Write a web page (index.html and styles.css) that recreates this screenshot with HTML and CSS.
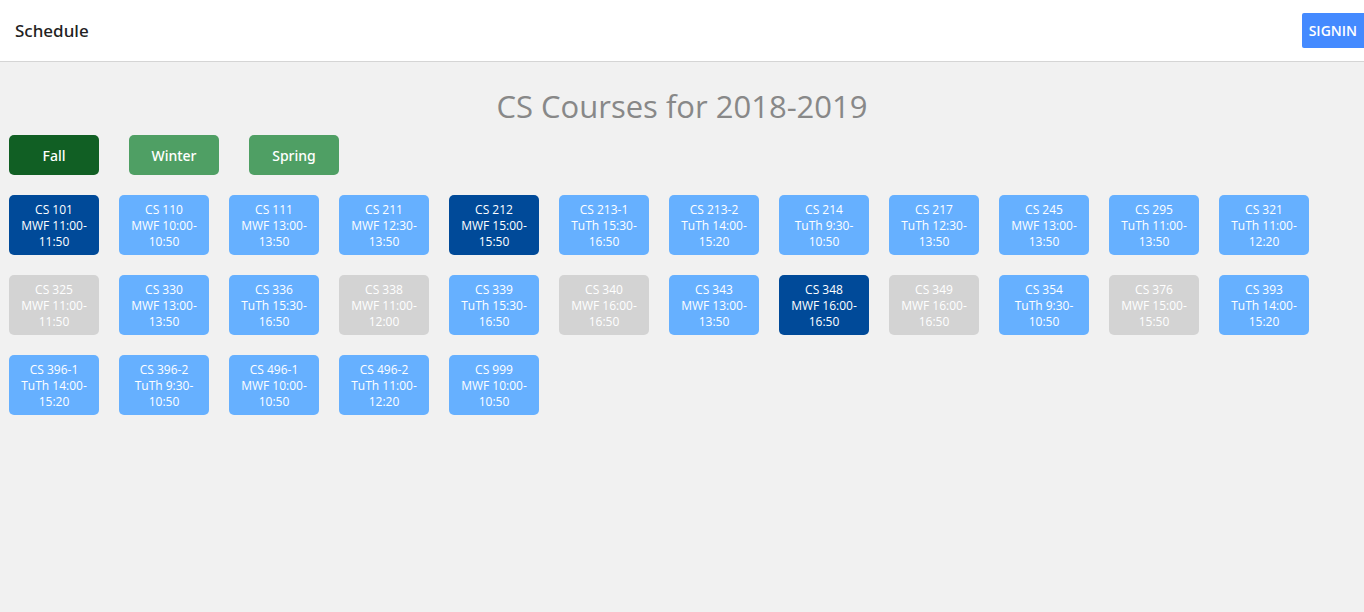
FILE: index.html
```html
<!DOCTYPE html>
<html lang="en">
<head>
<meta charset="utf-8">
<title>Schedule</title>
<link rel="stylesheet" href="styles.css">
</head>
<body>
<header class="header">
  <span class="brand">Schedule</span>
  <button class="signin" type="button">SIGNIN</button>
</header>
<main class="main">
  <h1 class="title">CS Courses for 2018-2019</h1>
  <div class="terms">
    <button class="term active" type="button">Fall</button>
    <button class="term" type="button">Winter</button>
    <button class="term" type="button">Spring</button>
  </div>
  <div class="courses">
    <button class="course selected" type="button">CS 101<br>MWF 11:00-11:50</button>
    <button class="course" type="button">CS 110<br>MWF 10:00-10:50</button>
    <button class="course" type="button">CS 111<br>MWF 13:00-13:50</button>
    <button class="course" type="button">CS 211<br>MWF 12:30-13:50</button>
    <button class="course selected" type="button">CS 212<br>MWF 15:00-15:50</button>
    <button class="course" type="button">CS 213-1<br>TuTh 15:30-16:50</button>
    <button class="course" type="button">CS 213-2<br>TuTh 14:00-15:20</button>
    <button class="course" type="button">CS 214<br>TuTh 9:30-10:50</button>
    <button class="course" type="button">CS 217<br>TuTh 12:30-13:50</button>
    <button class="course" type="button">CS 245<br>MWF 13:00-13:50</button>
    <button class="course" type="button">CS 295<br>TuTh 11:00-13:50</button>
    <button class="course" type="button">CS 321<br>TuTh 11:00-12:20</button>
    <button class="course conflict" type="button">CS 325<br>MWF 11:00-11:50</button>
    <button class="course" type="button">CS 330<br>MWF 13:00-13:50</button>
    <button class="course" type="button">CS 336<br>TuTh 15:30-16:50</button>
    <button class="course conflict" type="button">CS 338<br>MWF 11:00-12:00</button>
    <button class="course" type="button">CS 339<br>TuTh 15:30-16:50</button>
    <button class="course conflict" type="button">CS 340<br>MWF 16:00-16:50</button>
    <button class="course" type="button">CS 343<br>MWF 13:00-13:50</button>
    <button class="course selected" type="button">CS 348<br>MWF 16:00-16:50</button>
    <button class="course conflict" type="button">CS 349<br>MWF 16:00-16:50</button>
    <button class="course" type="button">CS 354<br>TuTh 9:30-10:50</button>
    <button class="course conflict" type="button">CS 376<br>MWF 15:00-15:50</button>
    <button class="course" type="button">CS 393<br>TuTh 14:00-15:20</button>
    <button class="course" type="button">CS 396-1<br>TuTh 14:00-15:20</button>
    <button class="course" type="button">CS 396-2<br>TuTh 9:30-10:50</button>
    <button class="course" type="button">CS 496-1<br>MWF 10:00-10:50</button>
    <button class="course" type="button">CS 496-2<br>TuTh 11:00-12:20</button>
    <button class="course" type="button">CS 999<br>MWF 10:00-10:50</button>
  </div>
</main>
</body>
</html>
```
FILE: styles.css
```css
* {
  box-sizing: border-box;
}

body {
  margin: 0;
  min-height: 100vh;
  background: #f1f1f1;
  font-family: "Open Sans", "Noto Sans", sans-serif;
}

button {
  margin: 0;
  border: 0;
  font-family: inherit;
  color: #fff;
  cursor: pointer;
}

.header {
  display: flex;
  align-items: center;
  justify-content: space-between;
  height: 62px;
  padding-left: 15px;
  background: #fff;
  border-bottom: 1px solid #d5d5d5;
}

.brand {
  font-family: "Noto Sans", "Open Sans", sans-serif;
  font-size: 17px;
  font-weight: 500;
  color: #222;
}

.signin {
  height: 35px;
  padding: 0 7px;
  border-radius: 2px 0 0 2px;
  background: #448aff;
  font-size: 14px;
  font-weight: 600;
}

.main {
  padding: 20px 9px;
}

.title {
  margin: 0;
  font-size: 31px;
  font-weight: 400;
  line-height: 48px;
  text-align: center;
  color: #888;
}

.terms {
  display: flex;
  flex-wrap: wrap;
  gap: 30px;
  margin-top: 5px;
}

.term {
  width: 90px;
  height: 40px;
  border-radius: 5px;
  background: #4f9f64;
  font-family: "Noto Sans", "Open Sans", sans-serif;
  font-size: 14px;
  font-weight: 500;
}

.term.active {
  background: #115f24;
}

.courses {
  display: flex;
  flex-wrap: wrap;
  gap: 20px;
  margin-top: 20px;
}

.course {
  width: 90px;
  min-height: 60px;
  padding: 2px 8px 0;
  border-radius: 5px;
  background: #66b0ff;
  font-size: 12px;
  font-weight: 500;
  line-height: 16px;
}

.course.selected {
  background: #004a99;
}

.course.conflict {
  background: #d3d3d3;
}
```
